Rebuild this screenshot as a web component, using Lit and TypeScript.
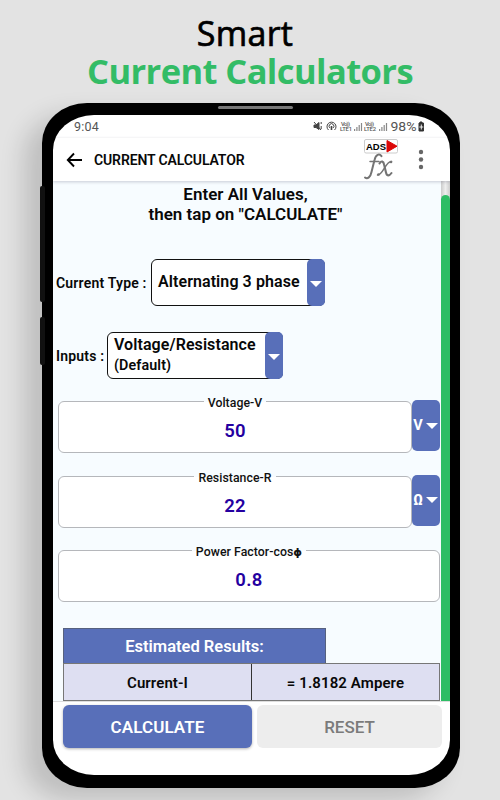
import { LitElement, html, css, svg } from "lit";
import { customElement, property } from "lit/decorators.js";

@customElement("drop-select")
class DropSelect extends LitElement {
  @property() label = "";
  @property() value = "";
  @property() note = "";
  static styles = css`
    :host { display: flex; align-items: center; height: 47px; padding-left: 3px; }
    .label { font-size: 14px; font-weight: 600; letter-spacing: .2px; white-space: nowrap; width: var(--label-width); }
    .box { display: flex; flex: none; height: 47px; box-sizing: border-box; width: var(--box-width); background: #fff; border: 1px solid #111; border-radius: 6px; }
    .text { flex: 1; padding-left: 6px; display: flex; flex-direction: column; justify-content: center; white-space: nowrap; font-size: 16px; font-weight: 600; line-height: 21px; letter-spacing: .08px; }
    .main { margin-top: -2px; }
    .note { font-size: 14.3px; letter-spacing: .1px; }
    .arrow { width: 18px; margin: -1px; background: #586fb9; border-radius: 5px; display: grid; place-items: center; padding-top: 2px; box-sizing: border-box; }
    svg { display: block; }
  `;
  render() {
    return html`<div class="label">${this.label}</div>
      <div class="box">
        <div class="text"><div class="main">${this.value}</div>${this.note ? html`<div class="note">${this.note}</div>` : ""}</div>
        <div class="arrow"><svg width="12" height="6" viewBox="0 0 12 6"><path d="M0 0h12L6 6z" fill="#fff"/></svg></div>
      </div>`;
  }
}

@customElement("value-field")
class ValueField extends LitElement {
  @property() label = "";
  @property() symbol = "";
  @property() value = "";
  @property() unit = "";
  static styles = css`
    :host { display: flex; height: 53px; margin: 0 1px 0 5px; }
    .field { flex: 1; box-sizing: border-box; height: 52px; margin-top: 1px; border: 1px solid #b5b7bb; border-radius: 6px; background: #fff; display: flex; flex-direction: column; align-items: center; }
    .label { font-size: 12.3px; line-height: 14px; height: 14px; margin-top: -6px; padding: 0 4px; font-weight: 500; color: #111; background: linear-gradient(#f7fcff 6px, #fff 6px); white-space: nowrap; letter-spacing: .05px; }
    .symbol { font-family: "DejaVu Sans", sans-serif; font-weight: 700; font-size: 11px; line-height: 12px; }
    .value { margin-top: 9px; font-size: 18.5px; line-height: 24px; font-weight: 600; color: #2400a0; letter-spacing: .3px; }
    .unit { width: 28px; margin: 0 .5px 0 -.5px; height: 51px; border-radius: 5px; background: #586fb9; color: #fff; display: flex; align-items: center; justify-content: center; gap: 3px; font-size: 14.5px; font-weight: 700; }
    svg { display: block; }
  `;
  render() {
    return html`<div class="field"><div class="label">${this.label}${this.symbol ? html`<span class="symbol">${this.symbol}</span>` : ""}</div><div class="value">${this.value}</div></div>
      ${this.unit ? html`<div class="unit"><span>${this.unit}</span><svg width="12" height="6" viewBox="0 0 12 6"><path d="M0 0h12L6 6z" fill="#fff"/></svg></div>` : ""}`;
  }
}

const bars = (x: number) => svg`<g fill="#888"><rect x=${x} y="12" width="1.2" height="2"/><rect x=${x + 2.3} y="10" width="1.2" height="4"/><rect x=${x + 4.6} y="8" width="1.2" height="6"/><rect x=${x + 6.9} y="6" width="1.2" height="8"/></g>`;
const lte = (x: number, n: number) => svg`<g fill="#555" font-family="Roboto, sans-serif" font-size="5.8" font-weight="500"><text x=${x + 1} y="8.5" textLength="9">Vo))</text><text x=${x} y="14" textLength="12">LTE${n}</text></g>`;

@customElement("app-root")
class AppRoot extends LitElement {
  static styles = css`
    :host { display: flex; flex-direction: column; width: 500px; height: 800px; overflow: hidden; position: relative; background: #e3e3e3; font-family: Roboto, "Liberation Sans", sans-serif; color: #080808; }
    .title { height: 103px; flex: none; text-align: center; font-family: "Open Sans", "Noto Sans", sans-serif; line-height: 37px; box-sizing: border-box; padding-top: 15px; white-space: nowrap; }
    .smart { font-size: 34px; font-weight: 400; -webkit-text-stroke: .7px #000; color: #000; padding-right: 10px; letter-spacing: .3px; }
    .product { font-size: 34.5px; font-weight: 700; color: #33bc66; letter-spacing: -.6px; }
    .phone { position: relative; box-sizing: border-box; width: 418px; height: 685px; margin-left: 42px; padding: 12px 10px 13px 11px; background: #000; border-radius: 45px / 40px; box-shadow: -18px 12px 24px rgba(0,0,0,.16); }
    .speaker { position: absolute; left: 176px; top: 3px; width: 75px; height: 3px; border-radius: 2px; background: #777; }
    .key { position: absolute; left: -2px; width: 5px; background: #111; border-radius: 2px; }
    .key.long { top: 83px; height: 116px; }
    .key.short { top: 214px; height: 48px; }
    .screen { height: 660px; background: #fff; border-radius: 41px / 35px; overflow: hidden; display: flex; flex-direction: column; }
    .status { height: 23px; display: flex; align-items: center; justify-content: space-between; padding: 0 24px 0 21px; color: #555; font-size: 12.5px; }
    .status span { letter-spacing: .2px; }
    .bar { height: 43px; display: flex; align-items: center; padding-left: 13px; position: relative; z-index: 1; box-shadow: 0 1px 3px rgba(60,60,90,.25); }
    .bar h1 { margin: 0 0 0 11px; font-size: 14px; font-weight: 600; flex: 1; white-space: nowrap; letter-spacing: -.12px; }
    .bar .tools { margin: 0 25px 0 0; }
    svg { display: block; flex: none; }
    .body { flex: none; height: 520px; display: flex; background: #f7fcff; }
    .form { width: 388px; flex: none; display: flex; flex-direction: column; }
    .scroll { flex: 1; background: linear-gradient(90deg, #ccc, #eee 50%, #ccc); padding-top: 14px; display: flex; }
    .thumb { flex: 1; background: #2dbd65; border-radius: 5px 5px 0 0; }
    .intro { height: 78px; padding: 3px 3px 0 0; box-sizing: border-box; text-align: center; font-size: 17px; line-height: 20px; font-weight: 600; white-space: nowrap; }
    .type { --label-width: 95px; --box-width: 174px; margin-bottom: 26px; }
    .inputs { --label-width: 51px; --box-width: 176px; margin-bottom: 21px; }
    value-field { margin-bottom: 21.5px; flex: none; }
    .results { margin: 4px 1px 0 10px; }
    .caption { width: 263px; height: 35px; box-sizing: border-box; border: 1px solid #56617f; border-bottom: 0; background: #586fb9; color: #fff; font-size: 16.5px; font-weight: 600; display: grid; place-items: center; padding-top: 2px; }
    .row { display: flex; height: 38px; box-sizing: border-box; border: 1px solid #777; background: #dedff2; font-size: 15px; font-weight: 600; letter-spacing: .1px; }
    .cell { flex: 1; display: grid; place-items: center; padding-top: 3px; }
    .cell + .cell { border-left: 1px solid #333; }
    .actions { flex: 1; border-top: 1px solid #ddd; display: flex; gap: 5px; padding: 3px 8px 0 10px; }
    .button { height: 43px; border-radius: 6px; display: grid; place-items: center; font-size: 17px; font-weight: 600; }
    .primary { width: 189px; background: #586fb9; color: #fff; box-shadow: 0 1px 3px rgba(0,0,0,.3); letter-spacing: .1px; }
    .muted { flex: 1; background: #ededed; color: #7b7b7b; font-weight: 500; }
  `;
  render() {
    return html`
      <div class="title"><div class="smart">Smart</div><div class="product">Current Calculators</div></div>
      <div class="phone">
        <div class="speaker"></div><div class="key long"></div><div class="key short"></div>
        <div class="screen">
          <div class="status"><span>9:04</span>
            <svg width="113" height="18" viewBox="0 0 113 18">
              <g transform="translate(0 -1)">
              <g fill="none" stroke="#444" stroke-width="1">
                <path d="M1 8h2l3-2.500v7L3 10.500H1z" fill="#444"/><path d="M1 5l7 8M8.200 5v2M8.200 9v3"/>
                <path d="M15.500 13a4.500 4.500 0 1 1 6 0M17 11a2.400 2.400 0 1 1 3 0"/><path d="M18.500 9v4" stroke-width="1.600"/>
              </g>
              ${lte(27, 1)}${bars(41)}${lte(51, 2)}${bars(66)}
              <text x="77.500" y="14" font-size="13" fill="#555" textLength="26" lengthAdjust="spacingAndGlyphs">98%</text>
              <path d="M106 6h1V5h2v1h1.500v8H106z" fill="#333" stroke="#333" stroke-linejoin="round"/><path d="M108.300 7.500v5M106.300 10h4" stroke="#fff" stroke-width=".9"/>
              </g>
            </svg>
          </div>
          <div class="bar">
            <svg width="17" height="16" viewBox="0 0 17 16"><path d="M8 1.500L1.800 8 8 14.500M2 8h14" fill="none" stroke="#000" stroke-width="1.900"/></svg>
            <h1>CURRENT CALCULATOR</h1>
            <svg class="tools" width="62" height="43" viewBox="0 0 62 43">
              <rect x="1.500" y="1.500" width="33" height="13.500" rx="1.500" fill="#fff" stroke="#ccc"/>
              <text x="3" y="12" font-family="Liberation Sans, sans-serif" font-size="9.500" font-weight="700" fill="#000" textLength="20">ADS</text>
              <path d="M24 2.500L34 8.200 24 14z" fill="#dc0808" stroke="#dc0808" stroke-linejoin="round"/>
              <g fill="none" stroke="#747474" stroke-linecap="round">
                <path d="M18.500 18.200C16.500 15.500 12.800 16 11.500 22L8.500 34C7.500 39 4.500 41.500 2 39.500" stroke-width="2"/>
                <path d="M7 23.500h9" stroke-width="1.500"/>
                <path d="M16.500 25.500C18.500 22.500 20.500 23 21.200 27L23 34.500C23.700 38 26 38.500 28.500 35" stroke-width="2.100"/>
                <path d="M28.500 23.500C23 22.500 20 37.500 14.500 37" stroke-width="1.500"/>
              </g>
              <circle cx="28" cy="24" r="1.300" fill="#747474"/><circle cx="15.500" cy="36.500" r="1.300" fill="#747474"/>
              <g fill="#666"><circle cx="58" cy="14" r="2.200"/><circle cx="58" cy="21.500" r="2.200"/><circle cx="58" cy="29" r="2.200"/></g>
            </svg>
          </div>
          <div class="body">
            <div class="form">
              <div class="intro">Enter All Values,<br>then tap on "CALCULATE"</div>
              <drop-select class="type" label="Current Type :" value="Alternating 3 phase"></drop-select>
              <drop-select class="inputs" label="Inputs :" value="Voltage/Resistance" note="(Default)"></drop-select>
              <value-field label="Voltage-V" value="50" unit="V"></value-field>
              <value-field label="Resistance-R" value="22" unit="Ω"></value-field>
              <value-field label="Power Factor-cos" symbol="ϕ" value="0.8"></value-field>
              <div class="results">
                <div class="caption">Estimated Results:</div>
                <div class="row"><div class="cell">Current-I</div><div class="cell">= 1.8182 Ampere</div></div>
              </div>
            </div>
            <div class="scroll"><div class="thumb"></div></div>
          </div>
          <div class="actions"><div class="button primary">CALCULATE</div><div class="button muted">RESET</div></div>
        </div>
      </div>`;
  }
}
